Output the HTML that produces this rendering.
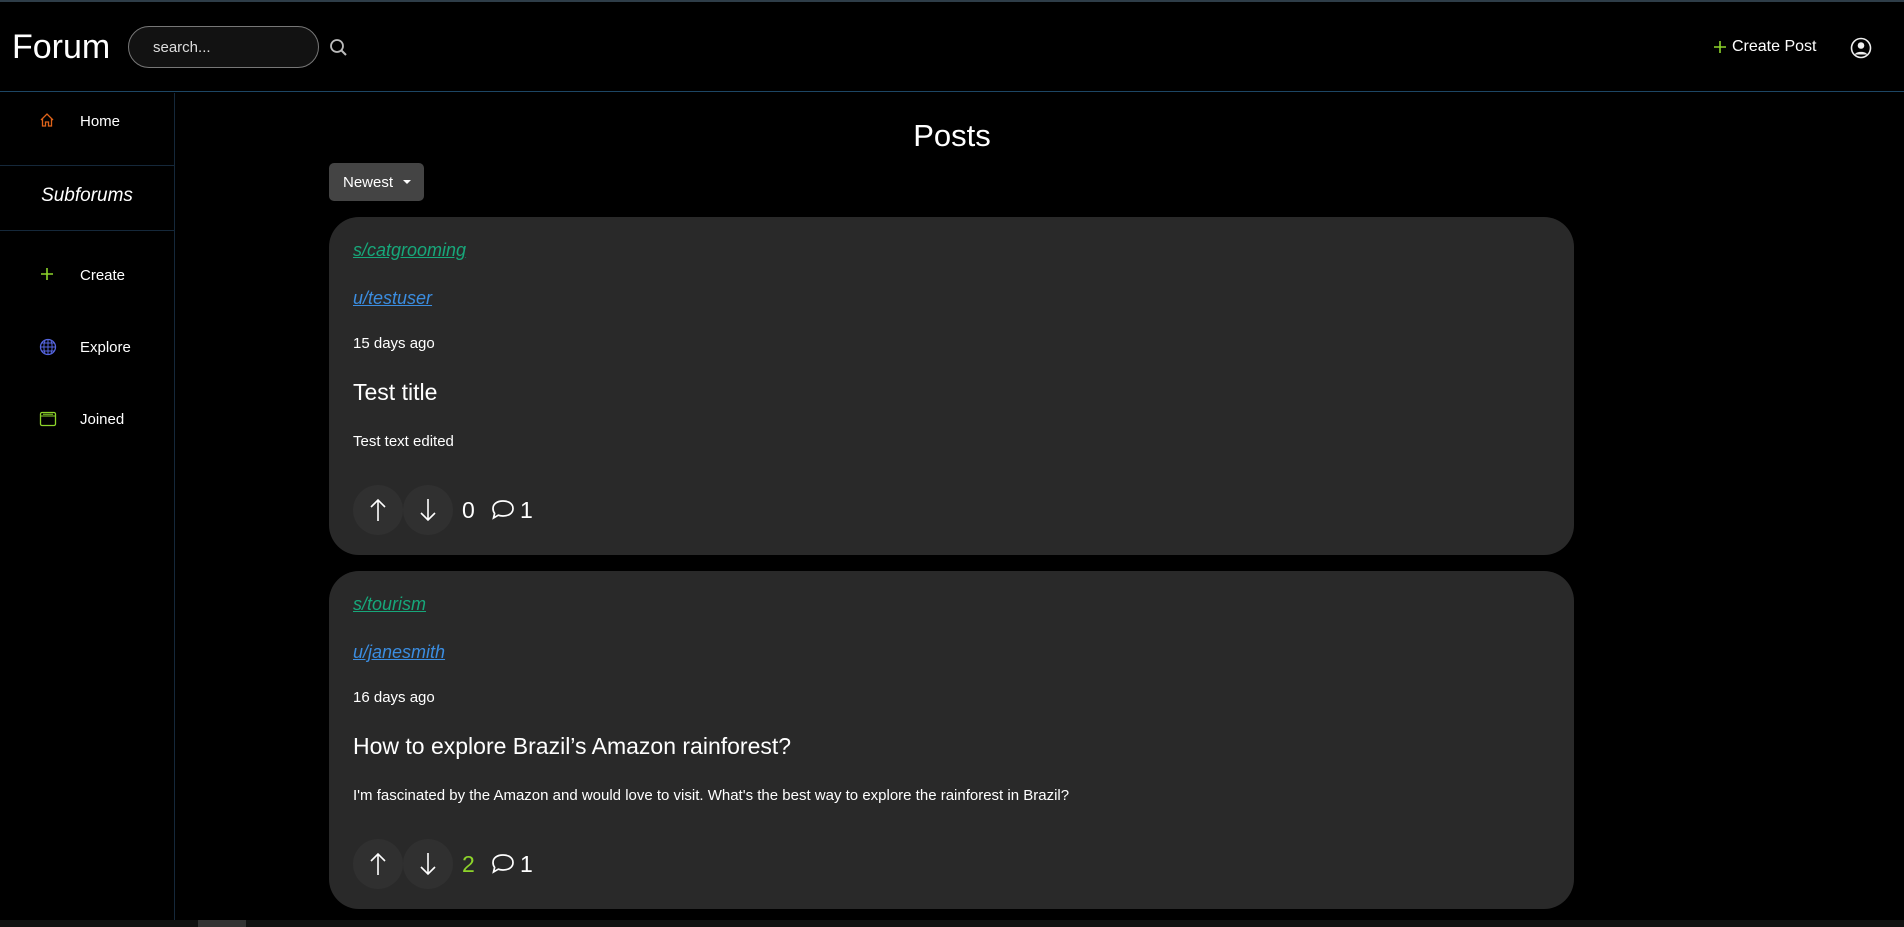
<!DOCTYPE html>
<html><head><meta charset="utf-8"><style>
*{box-sizing:border-box;margin:0;padding:0}
body{width:1904px;height:927px;background:#000;color:#fff;font-family:"Liberation Sans",sans-serif;overflow:hidden;position:relative}
.topline{position:absolute;left:0;top:0;width:1904px;height:2px;background:#2e3d48}
.hdr{position:absolute;left:0;top:2px;width:1904px;height:90px;border-bottom:1px solid #1d4664}
.logo{position:absolute;left:12px;top:26px;font-size:34px}
.search{position:absolute;left:128px;top:24px;width:191px;height:42px;border:1px solid #777;border-radius:21px;background:#121212;font-size:15px;color:#ddd;padding:12px 0 0 24px}
.side{position:absolute;left:0;top:93px;width:175px;height:834px;border-right:1px solid #15283a}
.item{position:absolute;left:0;width:174px;height:30px;font-size:15px}
.item span{position:absolute;left:80px;top:7px}
.item svg{position:absolute;left:39px;top:6px}
.sep{position:absolute;left:0;width:174px;height:1px;background:#15283a}
.sub{position:absolute;left:0;width:174px;text-align:center;top:92px;font-size:19px;font-style:italic}
.title{position:absolute;left:0;width:1904px;text-align:center;top:118px;font-size:31px}
.newest{position:absolute;left:329px;top:163px;width:95px;height:38px;background:#444;border-radius:5px;font-size:15px;padding:11px 0 0 14px}
.newest:after{content:"";position:absolute;left:74px;top:17px;border:4px solid transparent;border-top:4px solid #fff}
.card{position:absolute;left:329px;width:1245px;height:338px;background:#292929;border-radius:30px}
.card .s{position:absolute;left:24px;top:23px;font-size:18px;font-style:italic;color:#17a77a;text-decoration:underline}
.card .u{position:absolute;left:24px;top:71px;font-size:18px;font-style:italic;color:#3b8de0;text-decoration:underline}
.card .d{position:absolute;left:24px;top:118px;font-size:15px}
.card .t{position:absolute;left:24px;top:162px;font-size:23px}
.card .b{position:absolute;left:24px;top:216px;font-size:15px}
.vb{position:absolute;top:268px;width:50px;height:50px;border-radius:25px;background:#303030}
.vb svg{position:absolute;left:15px;top:12px}
.sc{position:absolute;left:133px;top:280px;font-size:23px}
.cm{position:absolute;left:161px;top:281px}
.cn{position:absolute;left:191px;top:280px;font-size:23px}
.sb{position:absolute;left:0;top:920px;width:1904px;height:7px;background:#111}
.sb div{position:absolute;left:198px;top:0;width:48px;height:7px;background:#333}
</style></head><body>
<div class="topline"></div>
<div class="hdr">
<div class="logo">Forum</div>
<div class="search">search...</div>
<svg style="position:absolute;left:329px;top:36px" width="20" height="20" viewBox="0 0 20 20"><circle cx="8" cy="8" r="6" fill="none" stroke="#bbb" stroke-width="1.8"/><path d="M12.5 12.5L17 17" stroke="#bbb" stroke-width="2"/></svg>
<svg style="position:absolute;left:1713px;top:38px" width="14" height="14"><path d="M7 1V13M1 7H13" stroke="#8dd42a" stroke-width="1.6"/></svg>
<div style="position:absolute;left:1732px;top:36px;font-size:16px">Create Post</div>
<svg style="position:absolute;left:1850px;top:35px" width="22" height="22" viewBox="0 0 22 22"><circle cx="11" cy="11" r="9.5" fill="none" stroke="#eee" stroke-width="1.6"/><circle cx="11" cy="8.5" r="3.3" fill="#eee"/><path d="M4.8 17.5C6 14 16 14 17.2 17.5" fill="#eee"/></svg>
</div>
<div class="side">
<div class="item" style="top:13px"><svg width="16" height="16" viewBox="0 0 16 16"><path d="M2 8L8 2L14 8M3.5 6.5V14H6.5V10H9.5V14H12.5V6.5" fill="none" stroke="#e0641a" stroke-width="1.3"/></svg><span>Home</span></div>
<div class="sep" style="top:72px"></div>
<div class="sub">Subforums</div>
<div class="sep" style="top:137px"></div>
<div class="item" style="top:167px"><svg width="16" height="16"><path d="M8 2V14M2 8H14" stroke="#8dd42a" stroke-width="1.6"/></svg><span>Create</span></div>
<div class="item" style="top:239px"><svg width="18" height="18" viewBox="0 0 18 18"><circle cx="9" cy="9" r="7.5" fill="none" stroke="#5565e0" stroke-width="1.3"/><path d="M1.5 9H16.5M9 1.5V16.5M3 5H15M3 13H15M6 2.5C4.5 6 4.5 12 6 15.5M12 2.5C13.5 6 13.5 12 12 15.5" fill="none" stroke="#5565e0" stroke-width="1"/></svg><span>Explore</span></div>
<div class="item" style="top:311px"><svg width="18" height="18" viewBox="0 0 18 18"><rect x="1.5" y="2.5" width="15" height="13" rx="1.5" fill="none" stroke="#8dd42a" stroke-width="1.3"/><path d="M1.5 6H16.5M4 4.2H14" stroke="#8dd42a" stroke-width="1"/></svg><span>Joined</span></div>
</div>
<div class="title">Posts</div>
<div class="newest">Newest</div>

<div class="card" style="top:217px">
<div class="s">s/catgrooming</div><div class="u">u/testuser</div><div class="d">15 days ago</div><div class="t">Test title</div><div class="b">Test text edited</div>
<div class="vb" style="left:24px"><svg width="20" height="26" viewBox="0 0 20 26"><path d="M10 24V3M3 10L10 3L17 10" fill="none" stroke="#fff" stroke-width="1.6"/></svg></div>
<div class="vb" style="left:74px"><svg width="20" height="26" viewBox="0 0 20 26"><path d="M10 2V23M3 16L10 23L17 16" fill="none" stroke="#fff" stroke-width="1.6"/></svg></div>
<div class="sc">0</div>
<svg class="cm" width="26" height="24" viewBox="0 0 26 24"><path d="M13 3C19 3 23 6 23 10.5C23 15 19 18 13 18C11 18 9.5 17.7 8.3 17.2L3.5 20L4.6 15.4C3.6 14 3 12.3 3 10.5C3 6 7 3 13 3Z" fill="none" stroke="#fff" stroke-width="1.7"/></svg>
<div class="cn">1</div>
</div>

<div class="card" style="top:571px">
<div class="s">s/tourism</div><div class="u">u/janesmith</div><div class="d">16 days ago</div><div class="t">How to explore Brazil’s Amazon rainforest?</div><div class="b">I'm fascinated by the Amazon and would love to visit. What's the best way to explore the rainforest in Brazil?</div>
<div class="vb" style="left:24px"><svg width="20" height="26" viewBox="0 0 20 26"><path d="M10 24V3M3 10L10 3L17 10" fill="none" stroke="#fff" stroke-width="1.6"/></svg></div>
<div class="vb" style="left:74px"><svg width="20" height="26" viewBox="0 0 20 26"><path d="M10 2V23M3 16L10 23L17 16" fill="none" stroke="#fff" stroke-width="1.6"/></svg></div>
<div class="sc" style="color:#8dd42a">2</div>
<svg class="cm" width="26" height="24" viewBox="0 0 26 24"><path d="M13 3C19 3 23 6 23 10.5C23 15 19 18 13 18C11 18 9.5 17.7 8.3 17.2L3.5 20L4.6 15.4C3.6 14 3 12.3 3 10.5C3 6 7 3 13 3Z" fill="none" stroke="#fff" stroke-width="1.7"/></svg>
<div class="cn">1</div>
</div>
<div class="sb"><div></div></div>
</body></html>
